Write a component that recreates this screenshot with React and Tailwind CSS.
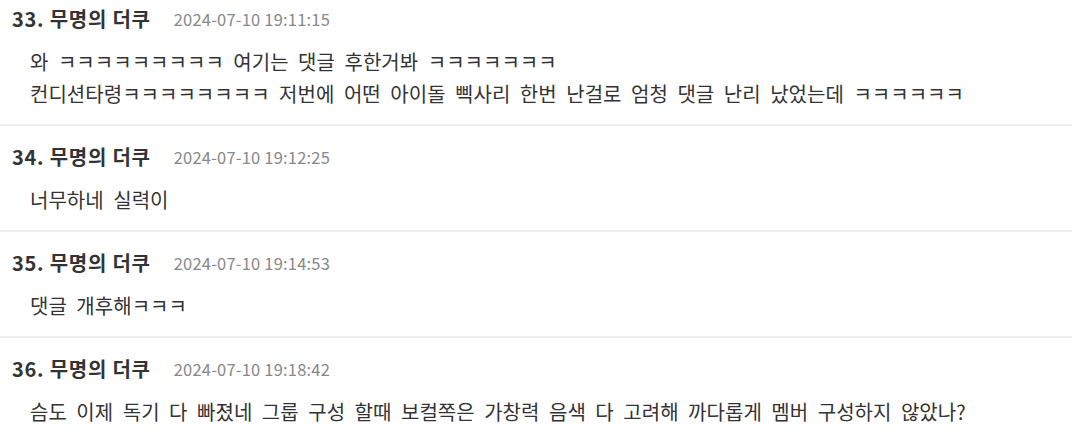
import React from 'react'

const comments = [
  {
    no: 33,
    date: '2024-07-10 19:11:15',
    lines: [
      '와 ㅋㅋㅋㅋㅋㅋㅋㅋㅋ 여기는 댓글 후한거봐 ㅋㅋㅋㅋㅋㅋㅋ',
      '컨디션타령ㅋㅋㅋㅋㅋㅋㅋㅋ 저번에 어떤 아이돌 삑사리 한번 난걸로 엄청 댓글 난리 났었는데 ㅋㅋㅋㅋㅋㅋ',
    ],
  },
  { no: 34, date: '2024-07-10 19:12:25', lines: ['너무하네 실력이'] },
  { no: 35, date: '2024-07-10 19:14:53', lines: ['댓글 개후해ㅋㅋㅋ'] },
  {
    no: 36,
    date: '2024-07-10 19:18:42',
    lines: ['슴도 이제 독기 다 빠졌네 그룹 구성 할때 보컬쪽은 가창력 음색 다 고려해 까다롭게 멤버 구성하지 않았나?'],
  },
]

const font = { fontFamily: '"Noto Sans CJK KR", "Noto Sans", sans-serif' }

export default function App() {
  return (
    <div className="w-[1072px] h-[443px] overflow-hidden bg-white" style={font}>
      {comments.map((c, i) => (
        <div
          key={c.no}
          className={`px-3 pb-[14px] ${i === 0 ? 'pt-[6px]' : 'pt-[18px] border-t-2 border-[#eeeeee]'}`}
        >
          {/* Header */}
          <div className="flex items-center h-[26px]">
            <span className="text-[20px] font-bold tracking-[0.75px] text-[#333333]">
              {c.no}. 무명의 더쿠
            </span>
            <span className="ml-[23px] text-[16.5px] tracking-[0.2px] text-[#888888]">{c.date}</span>
          </div>

          {/* Body */}
          <div className="mt-[14px] pl-[18px] text-[20px] tracking-[0.03px] [word-spacing:5px] leading-[32px] text-[#333333]">
            {c.lines.map((l, j) => (
              <div key={j}>{l}</div>
            ))}
          </div>
        </div>
      ))}
    </div>
  )
}
